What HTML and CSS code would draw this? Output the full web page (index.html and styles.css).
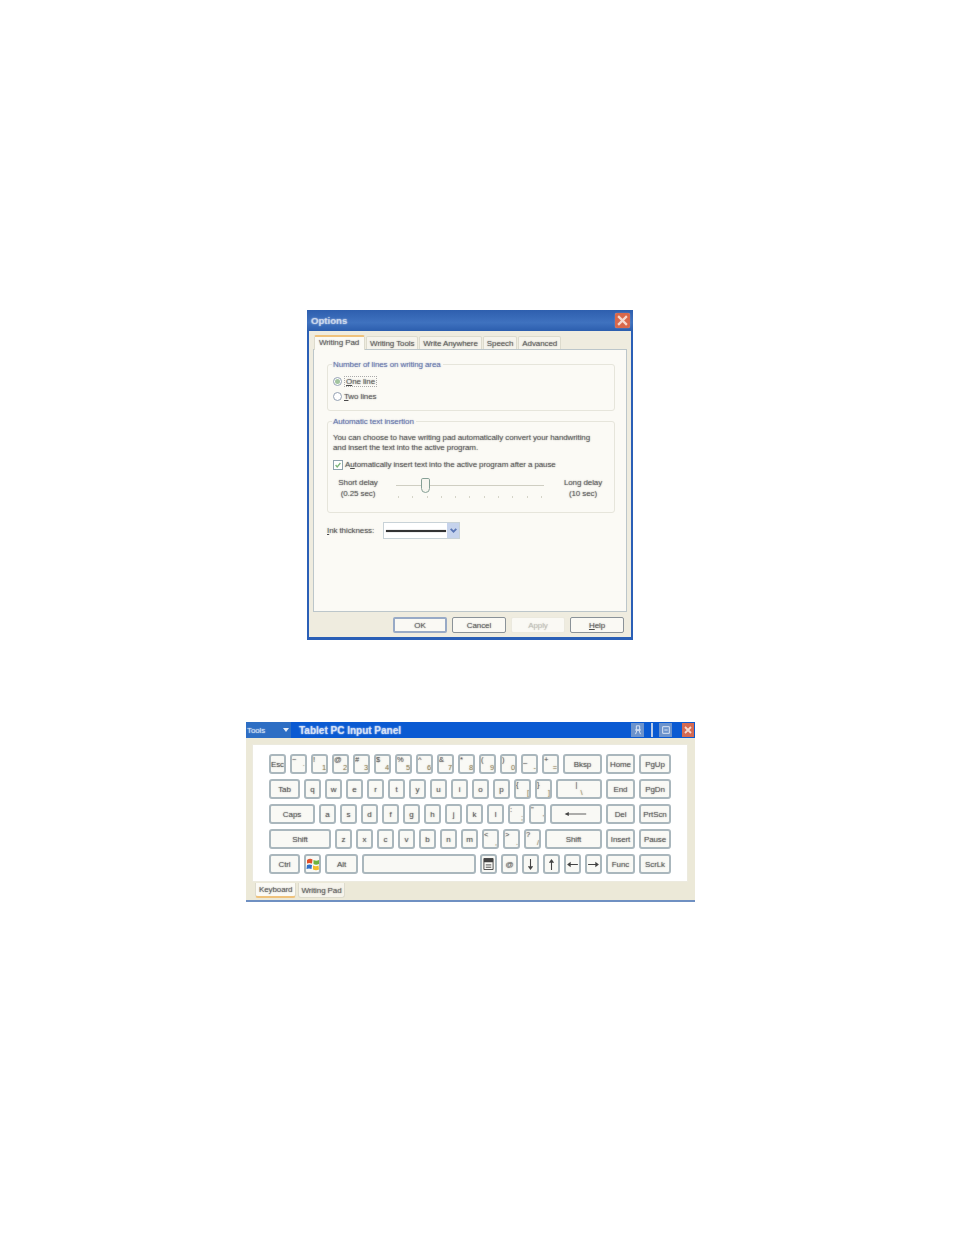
FILE: index.html
```html
<!DOCTYPE html>
<html lang="en">
<head>
<meta charset="utf-8">
<title>Tablet PC Input Panel options</title>
<link rel="stylesheet" href="styles.css">
</head>
<body>
<main class="page">
  <section class="dialog">
    <header class="dialog-title">
      <span class="dialog-name">Options</span>
      <span class="close-btn"><svg viewBox="0 0 12 12" class="x-icon"><path d="M2.500 2.500l7 7M9.500 2.500l-7 7"/></svg></span>
    </header>
    <div class="dialog-body">
      <nav class="tabs">
        <span class="tab active">Writing Pad</span>
        <span class="tab">Writing Tools</span>
        <span class="tab">Write Anywhere</span>
        <span class="tab">Speech</span>
        <span class="tab">Advanced</span>
      </nav>
      <div class="tab-panel">
        <fieldset class="group group-lines">
          <legend>Number of lines on writing area</legend>
          <div class="opt"><span class="radio on"></span><span class="focus"><u>O</u>ne line</span></div>
          <div class="opt"><span class="radio"></span><span><u>T</u>wo lines</span></div>
        </fieldset>
        <fieldset class="group group-auto">
          <legend>Automatic text insertion</legend>
          <p class="desc">You can choose to have writing pad automatically convert your handwriting<br>and insert the text into the active program.</p>
          <div class="opt check-row"><span class="check"><svg viewBox="0 0 10 10" class="tick"><path d="M2 5l2 2.500L8 2.500"/></svg></span><span>A<u>u</u>tomatically insert text into the active program after a pause</span></div>
          <div class="slider-row">
            <div class="delay">Short delay<br>(0.25 sec)</div>
            <div class="slider">
              <div class="track"></div>
              <span class="thumb"></span>
              <div class="ticks"><i></i><i></i><i></i><i></i><i></i><i></i><i></i><i></i><i></i><i></i><i></i></div>
            </div>
            <div class="delay">Long delay<br>(10 sec)</div>
          </div>
        </fieldset>
        <div class="ink-row">
          <span class="ink-label"><u>I</u>nk thickness:</span>
          <div class="combo"><span class="ink-line"></span><span class="combo-btn"><svg viewBox="0 0 8 8" class="chev"><path d="M1.500 2.500L4 5l2.500-2.500"/></svg></span></div>
        </div>
      </div>
      <footer class="dialog-actions">
        <span class="btn default">OK</span>
        <span class="btn">Cancel</span>
        <span class="btn disabled">Apply</span>
        <span class="btn"><u>H</u>elp</span>
      </footer>
    </div>
  </section>

  <section class="panel">
    <header class="panel-title">
      <span class="tools">Tools <span class="tri"></span></span>
      <span class="panel-name">Tablet PC Input Panel</span>
      <span class="title-btn"><svg viewBox="0 0 12 12" class="glyph"><path d="M4 1h4v5H4zM2.500 6h7M3 11l2-5M9 11L7 6"/></svg></span>
      <span class="sep"></span>
      <span class="title-btn"><svg viewBox="0 0 12 12" class="glyph"><path d="M2 2h8v8H2zM4 6h4"/></svg></span>
      <span class="title-btn red"><svg viewBox="0 0 12 12" class="x-icon"><path d="M3 3l6 6M9 3l-6 6"/></svg></span>
    </header>
    <div class="panel-body">
      <div class="keyboard">
        <div class="row">
          <span class="key">Esc</span>
          <span class="key dual"><b>~</b><s>`</s></span><span class="key dual"><b>!</b><s>1</s></span><span class="key dual"><b>@</b><s>2</s></span><span class="key dual"><b>#</b><s>3</s></span><span class="key dual"><b>$</b><s>4</s></span><span class="key dual"><b>%</b><s>5</s></span><span class="key dual"><b>^</b><s>6</s></span><span class="key dual"><b>&amp;</b><s>7</s></span><span class="key dual"><b>*</b><s>8</s></span><span class="key dual"><b>(</b><s>9</s></span><span class="key dual"><b>)</b><s>0</s></span><span class="key dual"><b>_</b><s>-</s></span>
          <span class="key dual"><b>+</b><s>=</s></span>
          <span class="key w39">Bksp</span><span class="key w29">Home</span><span class="key w32">PgUp</span>
        </div>
        <div class="row">
          <span class="key w31">Tab</span>
          <span class="key">q</span><span class="key">w</span><span class="key">e</span><span class="key">r</span><span class="key">t</span><span class="key">y</span><span class="key">u</span><span class="key">i</span><span class="key">o</span><span class="key">p</span>
          <span class="key dual"><b>{</b><s>[</s></span><span class="key dual"><b>}</b><s>]</s></span>
          <span class="key w46 dual wide-dual"><b>|</b><s>\</s></span><span class="key w29">End</span><span class="key w32">PgDn</span>
        </div>
        <div class="row">
          <span class="key w46">Caps</span>
          <span class="key">a</span><span class="key">s</span><span class="key">d</span><span class="key">f</span><span class="key">g</span><span class="key">h</span><span class="key">j</span><span class="key">k</span><span class="key">l</span>
          <span class="key dual"><b>:</b><s>;</s></span><span class="key dual"><b>"</b><s>'</s></span>
          <span class="key w52"><svg viewBox="0 0 40 8" class="enter"><path d="M5 4h32"/><path class="fill" d="M1 4l7-3.500v7z"/></svg></span><span class="key w29">Del</span><span class="key w32">PrtScn</span>
        </div>
        <div class="row">
          <span class="key w62">Shift</span>
          <span class="key">z</span><span class="key">x</span><span class="key">c</span><span class="key">v</span><span class="key">b</span><span class="key">n</span><span class="key">m</span>
          <span class="key dual"><b>&lt;</b><s>,</s></span><span class="key dual"><b>&gt;</b><s>.</s></span><span class="key dual"><b>?</b><s>/</s></span>
          <span class="key w57">Shift</span><span class="key w29">Insert</span><span class="key w32">Pause</span>
        </div>
        <div class="row">
          <span class="key w31">Ctrl</span>
          <span class="key"><svg viewBox="0 0 14 14" class="winlogo"><path fill="#e2502a" d="M1 3q3-2 5.500-.5L6 6.500Q3 5.500 1 6.500z"/><path fill="#6eb43f" d="M7.500 3q3 1.500 5.500 0v4q-3 1.500-5.500 0z"/><path fill="#2f6fc9" d="M1 8q2.500-1 5 0l-.5 4Q3 11 .5 12z"/><path fill="#f3bd2c" d="M7 8.500q3 1.500 5.500 0L13 12.500q-3 1.500-6 0z"/></svg></span>
          <span class="key w33">Alt</span>
          <span class="key w114"></span>
          <span class="key"><svg viewBox="0 0 12 14" class="calc"><path d="M1 1h10v12H1z" class="outline"/><path d="M1 1h10v4H1z" class="fill"/><path d="M3 8h6M3 10.500h6" class="outline"/></svg></span>
          <span class="key">@</span>
          <span class="key"><svg viewBox="0 0 10 14" class="arrow"><path d="M5 1v10"/><path class="fill" d="M2 9h6l-3 4z"/></svg></span>
          <span class="key"><svg viewBox="0 0 10 14" class="arrow"><path d="M5 3v10"/><path class="fill" d="M2 5h6L5 1z"/></svg></span>
          <span class="key"><svg viewBox="0 0 14 10" class="arrow-h"><path d="M3 5h10"/><path class="fill" d="M5 2v6L1 5z"/></svg></span>
          <span class="key"><svg viewBox="0 0 14 10" class="arrow-h"><path d="M1 5h10"/><path class="fill" d="M9 2v6l4-3z"/></svg></span>
          <span class="key w29">Func</span><span class="key w32">ScrLk</span>
        </div>
      </div>
      <nav class="panel-tabs">
        <span class="ptab active">Keyboard</span>
        <span class="ptab">Writing Pad</span>
      </nav>
    </div>
  </section>
</main>
</body>
</html>
```

FILE: styles.css
```css
* { box-sizing: border-box; }
html, body { margin: 0; padding: 0; background: #fff; }
body { font-family: "Liberation Sans", Arial, sans-serif; color: rgba(50, 50, 50, 0.55); text-shadow: 0 0 1.2px rgba(60, 60, 60, 0.75); }
.page { width: 954px; height: 1235px; padding-top: 310px; overflow: hidden; }

.dialog {
  width: 326px; height: 330px; margin-left: 307px;
  display: flex; flex-direction: column;
  background: #2a5fb6; padding: 0 2px 3px;
  font-size: 8px; letter-spacing: -0.1px; line-height: 11px;
}
.dialog-title {
  height: 21px; margin: 0 -2px; padding: 0 3px 0 4px; flex: none;
  display: flex; align-items: center; justify-content: space-between;
  background: linear-gradient(#2e5fae, #3f72bf 60%, #2c5eae);
}
.dialog-name { color: rgba(225, 232, 245, 0.6); text-shadow: 0 0 1.5px #e4eaf5; font-size: 9.6px; font-weight: bold; letter-spacing: 0; }
.close-btn {
  width: 15px; height: 15px; background: #d9684b; box-shadow: 0 0 1px #f0c4b4; border-radius: 2px;
  display: flex; align-items: center; justify-content: center;
}
.x-icon { width: 100%; height: 100%; fill: none; stroke: #f6d9cf; stroke-width: 1.8; }
.dialog-body {
  flex: 1; background: #efecdf; display: flex; flex-direction: column;
  padding: 5px 4px 0 4px; min-height: 0;
}
.tabs { display: flex; height: 13px; padding-left: 1px; flex: none; position: relative; z-index: 1; }
.tab {
  padding: 1px 3px 0 3px; margin-left: 1px; background: #f6f4ec;
  border: 1px solid #dddbcd; border-bottom: 0; border-radius: 2px 2px 0 0; white-space: nowrap;
}
.tab.active {
  background: #fbfaf5; border-top: 2px solid #efc27c; height: 15px; padding: 0 5px 0 4px;
  margin-top: -1px; margin-left: 0; border-bottom: 0;
}
.tab-panel {
  height: 263px; flex: none; background: #fbfaf5; border: 1px solid #bcc6ca;
  padding: 9px 11px 0 13px;
}
.group {
  margin: 0; padding: 0 4px 0 5px; border: 1px solid #e6e5db; border-radius: 3px;
  display: block; min-width: 0;
}
.group legend { color: rgba(70, 90, 155, 0.6); text-shadow: 0 0 1.2px rgba(70, 90, 155, 0.75); padding: 0 2px 0 1px; margin-left: -1px; line-height: 11px; }
.group-lines { height: 52px; padding-top: 4px; }
.group-auto { height: 97px; margin-top: 5px; }
.opt { display: flex; align-items: center; gap: 2px; height: 15px; }
.radio {
  width: 9px; height: 9px; border-radius: 50%; border: 1px solid #94a1b3; background: #fff;
  display: flex; align-items: center; justify-content: center;
}
.radio.on::after { content: ""; width: 5px; height: 5px; border-radius: 50%; background: #a3c49f; }
.focus { border: 1px dotted #aaa; padding: 0 1px; line-height: 9px; }
.desc { margin: 6px 0 0; line-height: 10px; }
.check-row { margin-top: 5px; gap: 2px; height: 13px; }
.check {
  width: 10px; height: 10px; border: 1px solid #8ea3ad; background: #fff;
  display: flex; align-items: center; justify-content: center;
}
.tick { width: 100%; height: 100%; fill: none; stroke: #7db679; stroke-width: 1.6; }
.slider-row { display: flex; margin-top: 6px; align-items: flex-start; }
.delay { width: 50px; text-align: center; line-height: 11px; }
.slider { width: 148px; margin: 0 14px 0 13px; height: 22px; position: relative; }
.track { margin-top: 8px; height: 1px; background: #cfcec2; }
.thumb {
  position: absolute; left: 25px; top: 1px; width: 9px; height: 15px;
  background: #f7f6ef; border: 1px solid #86a096; border-radius: 2px 2px 5px 5px;
}
.ticks { display: flex; justify-content: space-between; margin-top: 10px; padding: 0 2px; }
.ticks i { width: 1px; height: 2px; background: #d5d4c8; }
.ink-row { display: flex; align-items: center; margin: 9px 0 0 0; }
.ink-label { width: 56px; }
.combo {
  width: 77px; height: 17px; background: #fff; border: 1px solid #c8d2d7;
  display: flex; align-items: center; justify-content: space-between; padding-left: 2px;
}
.ink-line { width: 60px; height: 2px; background: #333; box-shadow: 0 0 1px #555; }
.combo-btn { width: 12px; height: 15px; background: #c6d3ec; display: flex; align-items: center; justify-content: center; }
.chev { width: 9px; height: 9px; fill: none; stroke: #5a76b5; stroke-width: 1.6; }
.dialog-actions { display: flex; justify-content: flex-end; gap: 5px; padding: 5px 3px 0 0; flex: none; }
.btn {
  width: 54px; height: 16px; background: #faf9f4; border: 1px solid #8a9298; border-radius: 2px;
  display: flex; align-items: center; justify-content: center;
}
.btn.default { border: 2px solid #98aac6; }
.btn.disabled { border-color: #ebe9de; color: rgba(170, 170, 160, 0.5); text-shadow: 0 0 1.2px rgba(170, 170, 160, 0.7); }

.panel {
  width: 449px; height: 180px; margin: 82px 0 0 246px;
  display: flex; flex-direction: column; background: #ece9d8;
  font-size: 8px; letter-spacing: -0.1px;
}
.panel-title {
  height: 16px; background: #0a5ad2; display: flex; align-items: center; flex: none;
  padding-right: 1px; gap: 2px;
}
.tools {
  width: 45px; height: 16px; background: #2d6ec4; color: rgba(240, 245, 252, 0.6); text-shadow: 0 0 1.2px #eef3fb; display: flex; align-items: center;
  justify-content: space-between; padding: 0 2px 0 1px; font-size: 8px;
}
.tri { width: 0; height: 0; border: 3px solid transparent; border-top: 4px solid #e6edf8; border-bottom: 0; }
.panel-name { color: rgba(235, 240, 250, 0.7); text-shadow: 0 0 1.5px #eaf0fb; font-size: 10px; font-weight: bold; letter-spacing: 0; margin-left: 6px; flex: 1; }
.title-btn {
  width: 13px; height: 14px; background: #6c93cc; display: flex; align-items: center; justify-content: center;
  margin-right: 1px;
}
.title-btn.red { background: #d46a52; margin-left: 7px; margin-right: 0; width: 12px; }
.sep { width: 2px; height: 14px; background: #b9cbe8; margin: 0 4px; }
.glyph { width: 10px; height: 10px; fill: none; stroke: #d8e3f3; stroke-width: 1.2; }
.panel-body { flex: 1; padding: 6px 7px 0 6px; display: flex; flex-direction: column; border-bottom: 2px solid #6f90c2; }
.keyboard {
  height: 138px; background: #fff; padding: 9px 0 0 16px; display: flex; flex-direction: column; gap: 5px;
  flex: none; border: 1px solid #eceade;
}
.row { display: flex; gap: 4px; height: 20px; }
.key {
  width: 17px; height: 20px; flex: none; background: #f9f9f5; border: 2px solid #aab7bd; border-radius: 3px;
  display: flex; align-items: center; justify-content: center; white-space: nowrap; overflow: hidden;
}
.dual { justify-content: space-between; padding: 0; position: relative; font-size: 7.5px; }
.dual b { font-weight: normal; align-self: flex-start; line-height: 8px; }
.dual s { text-decoration: none; align-self: flex-end; line-height: 8px; color: rgba(120, 100, 50, 0.5); text-shadow: 0 0 1.2px rgba(120, 100, 50, 0.7); }
.wide-dual { justify-content: center; gap: 3px; }
.w29 { width: 29px; } .w31 { width: 31px; } .w32 { width: 32px; } .w33 { width: 33px; }
.w39 { width: 39px; } .w46 { width: 46px; } .w52 { width: 52px; } .w57 { width: 57px; }
.w62 { width: 62px; } .w114 { width: 114px; }
.enter { width: 24px; height: 6px; fill: none; stroke: #444; stroke-width: 1.4; }
.arrow { width: 9px; height: 13px; fill: none; stroke: #444; stroke-width: 1.2; }
.arrow-h { width: 13px; height: 9px; fill: none; stroke: #444; stroke-width: 1.2; }
.fill { fill: #444; stroke: none; }
.winlogo { width: 14px; height: 14px; margin: -1px; }
.calc { width: 11px; height: 14px; fill: none; }
.outline { stroke: #444; fill: none; }
.panel-tabs { display: flex; gap: 2px; padding: 1px 0 0 3px; height: 17px; }
.ptab {
  height: 15px; padding: 0 2px; background: #f6f4ec; border: 1px solid #dddbcd; border-top: 0;
  border-radius: 0 0 3px 3px; display: flex; align-items: center; white-space: nowrap;
}
.ptab.active { background: #fbfaf5; border-bottom: 2px solid #efc27c; padding: 0 3px; }
```
